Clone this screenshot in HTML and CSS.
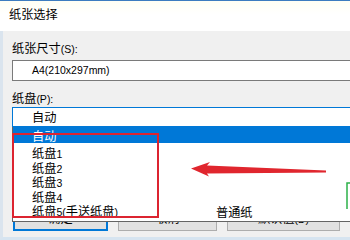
FILE: index.html
```html
<!DOCTYPE html>
<html lang="zh-CN">
<head>
  <meta charset="UTF-8">
  <title>纸张选择</title>
  <link rel="stylesheet" href="styles.css">
</head>
<body>

<div class="window">
  <div class="titlebar">纸张选择</div>

  <div class="client">
    <div class="label">纸张尺寸<span class="en">(S):</span></div>
    <div class="combo"><span class="en">A4(210x297mm)</span></div>

    <div class="label">纸盘<span class="en">(P):</span></div>
    <div class="combo-wrap">
      <div class="combo focused">自动</div>
      <ul class="dropdown">
        <li class="selected">自动</li>
        <li>纸盘<span class="en">1</span></li>
        <li>纸盘<span class="en">2</span></li>
        <li>纸盘<span class="en">3</span></li>
        <li>纸盘<span class="en">4</span></li>
        <li>纸盘<span class="en">5(</span>手送纸盘<span class="en">)</span></li>
      </ul>
    </div>

    <div class="buttons">
      <div class="btn btn-ok">确定</div>
      <div class="btn btn-cancel">取消</div>
      <div class="btn btn-default">默认值<span class="en">(D)</span></div>
    </div>
  </div>

  <!-- overlays from the screenshot -->
  <span class="paper-type">普通纸</span>
  <div class="callout-box"></div>
  <svg class="arrow" width="145" height="22" viewBox="0 0 145 22">
    <path d="M6 9.5 L25 3 L22 6.5 L141 11.6 L141 13.4 L22 14.5 L24 17.5 Z" fill="#e0262e"/>
  </svg>
  <svg class="green-mark" width="6" height="27" viewBox="0 0 6 27">
    <path d="M6 1 H3 V27" fill="none" stroke="#2db14a" stroke-width="1.5"/>
  </svg>
</div>

</body>
</html>
```

FILE: styles.css
```css
html, body { margin: 0; overflow: hidden; }
body {
  font-family: "Liberation Sans", "Noto Sans CJK SC", sans-serif;
  font-size: 12.2px;
  color: #000;
  background: #f0f0f0;
}
.en { font-size: 10.5px; }

.window {
  position: relative;
  width: 380px;
  height: 240px;
  overflow: hidden;
  border-top: 1px solid #3d7cc0;
  box-sizing: border-box;
}
.titlebar {
  height: 30px;
  line-height: 29px;
  padding-left: 9px;
  background: linear-gradient(#fffff4, #ffffff 45%);
}
.client {
  height: 209px;
  box-sizing: border-box;
  background: #f0f0f0;
  border-left: 3px solid #dae4ee;
  border-bottom: 3px solid #d6e4f0;
  padding: 10px 0 0 9px;
}
.label {
  height: 16px;
  line-height: 17px;
}
.label + .combo { margin-top: 3px; }
.combo + .label { margin-top: 10px; }

.combo {
  width: 360px;
  height: 21px;
  line-height: 19px;
  box-sizing: border-box;
  border: 1px solid #7a7a7a;
  background: #fff;
  padding-left: 19px;
}
.combo.focused {
  height: 20px;
  line-height: 20px;
  border-color: #0078d7;
}
.combo-wrap { position: relative; width: 360px; }

.dropdown {
  position: absolute;
  top: 100%;
  left: 0;
  right: 0;
  z-index: 2;
  margin: 0;
  padding: 0 0 1px;
  list-style: none;
  background: #fff;
  border: 1px solid #646464;
  border-top: none;
}
.dropdown li {
  height: 14.6px;
  line-height: 14.6px;
  padding-left: 19px;
  white-space: nowrap;
}
.dropdown li.selected {
  height: 16px;
  line-height: 20px;
  margin-bottom: 4px;
  background: #0078d7;
  color: #fff;
}

.buttons {
  display: flex;
  gap: 10px;
  margin-top: 81px;
  margin-left: 1px;
}
.btn {
  height: 23px;
  box-sizing: border-box;
  line-height: 21px;
  text-align: center;
  background: #e1e1e1;
  border: 1px solid #adadad;
}
.btn-ok { width: 95px; border: 2px solid #0078d7; line-height: 19px; }
.btn-cancel { width: 99px; }
.btn-default { width: 113px; }

.paper-type {
  position: absolute;
  left: 216px;
  top: 205px;
  z-index: 3;
  line-height: 14.6px;
}
.callout-box {
  position: absolute;
  left: 12px;
  top: 132px;
  width: 147px;
  height: 85px;
  box-sizing: border-box;
  border: 2px solid #dc2430;
  z-index: 4;
}
.arrow {
  position: absolute;
  left: 185px;
  top: 158px;
  z-index: 4;
}
.green-mark {
  position: absolute;
  left: 344px;
  top: 181px;
  z-index: 4;
}
```
